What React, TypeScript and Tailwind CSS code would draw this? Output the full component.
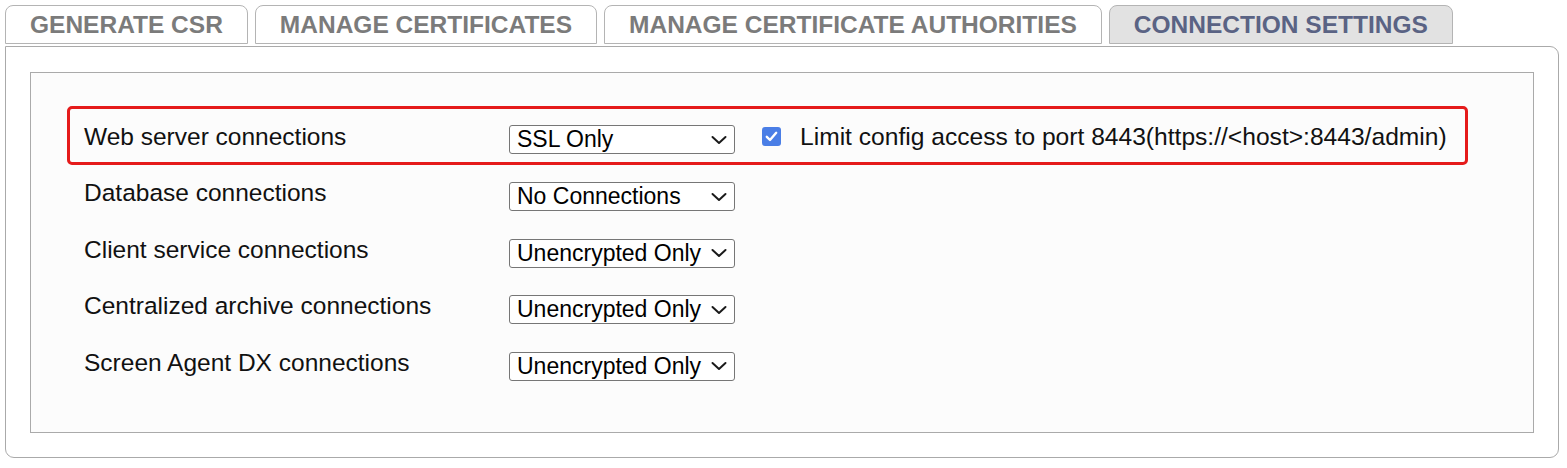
import React from "react";

const FONT = { fontFamily: '"Liberation Sans", Arial, sans-serif' };

function Chevron() {
  return (
    <svg width="16" height="10" viewBox="0 0 16 10" className="shrink-0">
      <path d="M1.5 2 L8 8 L14.5 2" fill="none" stroke="#1a1a1a" strokeWidth="2" strokeLinecap="round" strokeLinejoin="round" />
    </svg>
  );
}

function Select({ value }: { value: string }) {
  return (
    <div className="w-[226px] h-[29px] border border-[#767676] rounded-[3px] bg-white flex items-center justify-between pl-[7px] pr-[7px] box-border">
      <span className="text-[23px] leading-[27px] text-black whitespace-nowrap">{value}</span>
      <Chevron />
    </div>
  );
}

function Row({ label, value }: { label: string; value: string }) {
  return (
    <div className="h-[56.5px] flex items-start pl-[17px]">
      <div className="w-[425px] mt-[14px] text-[24.5px] leading-[28px] text-[#111] whitespace-nowrap">{label}</div>
      <div className="mt-[17px]">
        <Select value={value} />
      </div>
    </div>
  );
}

export default function App() {
  const tabs = [
    { name: "GENERATE CSR", active: false },
    { name: "MANAGE CERTIFICATES", active: false },
    { name: "MANAGE CERTIFICATE AUTHORITIES", active: false },
    { name: "CONNECTION SETTINGS", active: true },
  ];
  return (
    <div className="w-[1567px] h-[468px] bg-white pl-[5px] pt-[5px] box-border" style={FONT}>
      <div className="flex gap-[7px] h-[39px]">
        {tabs.map((t) => (
          <div
            key={t.name}
            className={
              t.active
                ? "h-[39px] px-6 flex items-center border border-[#b4b4b4] rounded-t-[8px] bg-[#e2e2e2] text-[#5a6384] font-bold text-[24.5px] leading-[28px] whitespace-nowrap"
                : "h-[39px] px-6 flex items-center border border-[#b4b4b4] rounded-t-[8px] bg-white text-[#7b7b7b] font-bold text-[24.5px] leading-[28px] whitespace-nowrap"
            }
          >
            {t.name}
          </div>
        ))}
      </div>
      <div className="mt-[2px] w-[1554px] h-[412px] border border-[#aaaaaa] rounded-[9px] rounded-tl-none bg-white pt-[25px] px-6 pb-6 box-border">
        <div className="w-full h-[361px] border border-[#aaaaaa] bg-[#fcfcfc] pt-[33px] pl-[36px] box-border">
          <div className="w-[1401px] h-[59px] border-[3px] border-[#e51b1b] rounded-[5px] flex items-start pl-[14px] box-border">
            <div className="w-[425px] mt-[14px] text-[24.5px] leading-[28px] text-[#111] whitespace-nowrap">Web server connections</div>
            <div className="mt-[16px]">
              <Select value="SSL Only" />
            </div>
            <div className="ml-[27px] mt-[18px] w-[19px] h-[19px] rounded-[3px] bg-[#4a7ee6] flex items-center justify-center shrink-0">
              <svg width="13" height="11" viewBox="0 0 13 11">
                <path d="M1.8 5.8 L5 9 L11.2 1.8" fill="none" stroke="white" strokeWidth="2.4" strokeLinecap="round" strokeLinejoin="round" />
              </svg>
            </div>
            <div className="ml-[19px] mt-[14px] text-[24.6px] leading-[28px] text-[#111] whitespace-nowrap">
              Limit config access to port 8443(https://&lt;host&gt;:8443/admin)
            </div>
          </div>
          <Row label="Database connections" value="No Connections" />
          <Row label="Client service connections" value="Unencrypted Only" />
          <Row label="Centralized archive connections" value="Unencrypted Only" />
          <Row label="Screen Agent DX connections" value="Unencrypted Only" />
        </div>
      </div>
    </div>
  );
}
